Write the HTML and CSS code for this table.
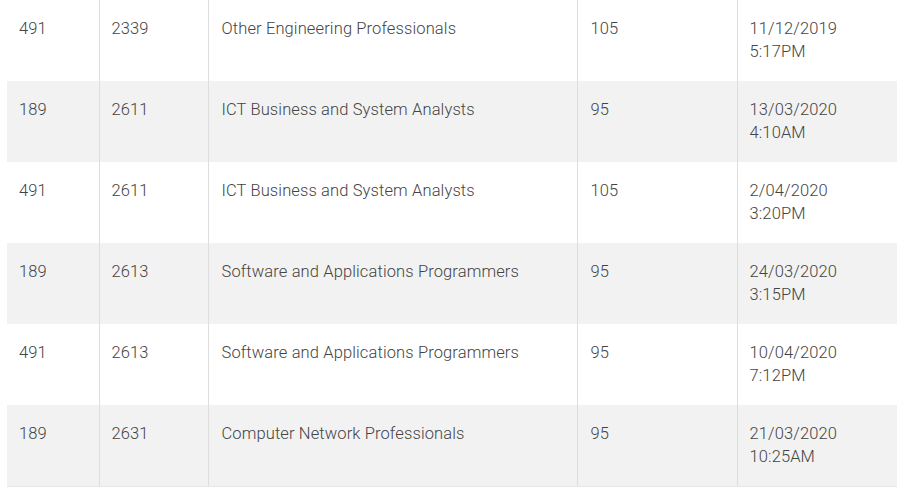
FILE: index.html
```html
<!DOCTYPE html>
<html>
<head>
<meta charset="utf-8">
<link rel="stylesheet" href="styles.css">
</head>
<body>
<table class="grid">
  <colgroup>
    <col class="c1"><col class="c2"><col class="c3"><col class="c4"><col class="c5">
  </colgroup>
  <tbody>
    <tr><td>491</td><td>2339</td><td>Other Engineering Professionals</td><td>105</td><td>11/12/2019<br>5:17PM</td></tr>
    <tr><td>189</td><td>2611</td><td>ICT Business and System Analysts</td><td>95</td><td>13/03/2020<br>4:10AM</td></tr>
    <tr><td>491</td><td>2611</td><td>ICT Business and System Analysts</td><td>105</td><td>2/04/2020<br>3:20PM</td></tr>
    <tr><td>189</td><td>2613</td><td>Software and Applications Programmers</td><td>95</td><td>24/03/2020<br>3:15PM</td></tr>
    <tr><td>491</td><td>2613</td><td>Software and Applications Programmers</td><td>95</td><td>10/04/2020<br>7:12PM</td></tr>
    <tr><td>189</td><td>2631</td><td>Computer Network Professionals</td><td>95</td><td>21/03/2020<br>10:25AM</td></tr>
  </tbody>
</table>
</body>
</html>
```
FILE: styles.css
```css
html, body {
  margin: 0;
  padding: 0;
  background: #fff;
}
body {
  padding: 0 3px 0 7px;
  font-family: Roboto, "Liberation Sans", sans-serif;
  font-weight: 300;
  font-size: 16.5px;
  letter-spacing: 0.12px;
  color: #444;
}
.grid {
  width: 890px;
  border-collapse: collapse;
  table-layout: fixed;
}
.c1 { width: 92px; }
.c2 { width: 109px; }
.c3 { width: 369px; }
.c4 { width: 160px; }
.c5 { width: 160px; }
.grid td {
  vertical-align: top;
  padding: 18px 12px 18px 12px;
  line-height: 22.5px;
  height: 45px;
  border-left: 1px solid #dedede;
}
.grid td:first-child {
  border-left: none;
}
.grid td:nth-child(3),
.grid td:nth-child(4) {
  padding-left: 13px;
}
.grid tr:nth-child(even) td {
  background: #f2f2f2;
}
.grid tr:last-child td {
  border-bottom: 1px solid #e6e6e6;
}
```
